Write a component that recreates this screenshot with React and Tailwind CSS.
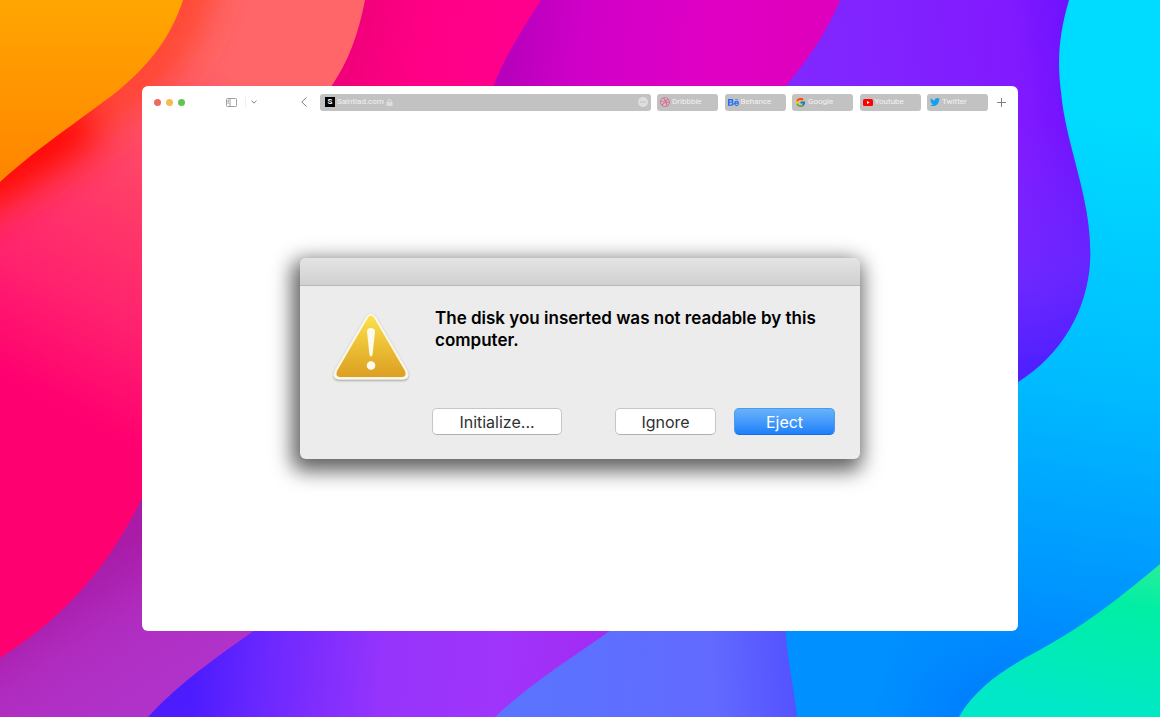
import React from "react";
import { FaDribbble, FaBehance, FaTwitter, FaLock } from "react-icons/fa";
import { FcGoogle } from "react-icons/fc";

const bookmarks = [
  { label: "Dribbble", href: "#dribbble", icon: <FaDribbble className="size-[10px] text-[#e2588c]" /> },
  { label: "Behance", href: "#behance", icon: <FaBehance className="size-[11px] text-[#1769ff]" /> },
  { label: "Google", href: "#google", icon: <FcGoogle className="size-[11px]" /> },
  {
    label: "Youtube",
    href: "#youtube",
    icon: (
      <svg viewBox="0 0 20 14" className="h-[7px] w-[10px]" aria-hidden="true">
        <rect width="20" height="14" rx="3" fill="#ff0000" />
        <path d="M8 4l5.4 3L8 10z" fill="#fff" />
      </svg>
    ),
  },
  { label: "Twitter", href: "#twitter", icon: <FaTwitter className="size-[10px] text-[#14a0f0]" /> },
];

function Wallpaper() {
  return (
    <svg
      className="absolute inset-0 h-full w-full"
      viewBox="0 0 1160 717"
      preserveAspectRatio="xMidYMid slice"
      aria-hidden="true"
    >
      <defs>
        <linearGradient id="orange" x1="0" y1="0" x2="0" y2="1">
          <stop offset="0" stopColor="#ffa600" />
          <stop offset="1" stopColor="#ff8400" />
        </linearGradient>
        <linearGradient id="coral" gradientUnits="userSpaceOnUse" x1="248" y1="78" x2="70" y2="412">
          <stop offset="0" stopColor="#ff666a" />
          <stop offset="0.45" stopColor="#ff3a68" />
          <stop offset="0.72" stopColor="#ff226e" />
          <stop offset="1" stopColor="#ff0070" />
        </linearGradient>
        <linearGradient id="pink" gradientUnits="userSpaceOnUse" x1="340" y1="30" x2="500" y2="60">
          <stop offset="0" stopColor="#ee0078" />
          <stop offset="0.5" stopColor="#ff0085" />
          <stop offset="1" stopColor="#ff008c" />
        </linearGradient>
        <linearGradient id="magenta" gradientUnits="userSpaceOnUse" x1="510" y1="30" x2="800" y2="60">
          <stop offset="0" stopColor="#b800bc" />
          <stop offset="0.25" stopColor="#d000c8" />
          <stop offset="0.7" stopColor="#e000c4" />
          <stop offset="1" stopColor="#de00bc" />
        </linearGradient>
        <linearGradient id="violet" gradientUnits="userSpaceOnUse" x1="810" y1="120" x2="1085" y2="90">
          <stop offset="0" stopColor="#8028ff" />
          <stop offset="0.75" stopColor="#821aff" />
          <stop offset="1" stopColor="#6c10ff" />
        </linearGradient>
        <linearGradient id="violetFade" gradientUnits="userSpaceOnUse" x1="1020" y1="130" x2="1060" y2="360">
          <stop offset="0" stopColor="#6a34ff" stopOpacity="0" />
          <stop offset="0.6" stopColor="#6230ff" stopOpacity="0.6" />
          <stop offset="1" stopColor="#4a20ff" stopOpacity="0.9" />
        </linearGradient>
        <linearGradient id="plum" gradientUnits="userSpaceOnUse" x1="70" y1="580" x2="140" y2="690">
          <stop offset="0" stopColor="#a81ca8" />
          <stop offset="0.5" stopColor="#b02cc0" />
          <stop offset="1" stopColor="#b032c8" />
        </linearGradient>
        <linearGradient id="indigo" gradientUnits="userSpaceOnUse" x1="195" y1="655" x2="590" y2="690">
          <stop offset="0" stopColor="#4c1cff" />
          <stop offset="0.18" stopColor="#6b28ff" />
          <stop offset="0.48" stopColor="#9634fc" />
          <stop offset="0.78" stopColor="#a034fa" />
          <stop offset="1" stopColor="#a22cf4" />
        </linearGradient>
        <linearGradient id="periwinkle" gradientUnits="userSpaceOnUse" x1="520" y1="700" x2="795" y2="680">
          <stop offset="0" stopColor="#5a74ff" />
          <stop offset="0.7" stopColor="#626aff" />
          <stop offset="1" stopColor="#5452ff" />
        </linearGradient>
        <linearGradient id="sky" gradientUnits="userSpaceOnUse" x1="1100" y1="110" x2="1010" y2="700">
          <stop offset="0" stopColor="#00dcff" />
          <stop offset="0.45" stopColor="#00bcff" />
          <stop offset="0.8" stopColor="#0096ff" />
          <stop offset="1" stopColor="#007cff" />
        </linearGradient>
        <linearGradient id="skyLow" gradientUnits="userSpaceOnUse" x1="890" y1="640" x2="1000" y2="670">
          <stop offset="0" stopColor="#0090ff" />
          <stop offset="1" stopColor="#0090ff" stopOpacity="0" />
        </linearGradient>
        <linearGradient id="green" gradientUnits="userSpaceOnUse" x1="1140" y1="570" x2="1110" y2="717">
          <stop offset="0" stopColor="#20ee9c" />
          <stop offset="0.25" stopColor="#00eea4" />
          <stop offset="1" stopColor="#00e8c8" />
        </linearGradient>
        <filter id="soft" filterUnits="userSpaceOnUse" x="-120" y="-120" width="500" height="500">
          <feGaussianBlur stdDeviation="20" />
        </filter>
        <clipPath id="coralClip">
          <path d="M0 0H365C358 36 348 62 331 87L142 498C112 560 70 614 0 658Z" />
        </clipPath>
      </defs>
      <rect width="1160" height="717" fill="url(#sky)" />
      <path d="M785 600H1018V717H785Z" fill="url(#skyLow)" />
      <path d="M450 600H785C784 652 794 684 797 717H450Z" fill="url(#periwinkle)" />
      <path d="M148 717L220 600H640L611 630C572 658 531 683 495 717Z" fill="url(#indigo)" />
      <path d="M0 480H300L255 630C217 657 180 682 148 717H0Z" fill="url(#plum)" />
      <path d="M700 0H1069C1059 34 1057 60 1061 92C1066 148 1093 200 1090 262C1087 310 1062 354 1018 382L900 440H700Z" fill="url(#violet)" />
      <path d="M700 0H1069C1059 34 1057 60 1061 92C1066 148 1093 200 1090 262C1087 310 1062 354 1018 382L900 440H700Z" fill="url(#violetFade)" />
      <path d="M500 0H840C827 32 809 58 785 87L760 120H480Z" fill="url(#magenta)" />
      <path d="M340 0H541C523 28 505 56 493 87L480 120H310Z" fill="url(#pink)" />
      <path d="M0 0H365C358 36 348 62 331 87L142 498C112 560 70 614 0 658Z" fill="url(#coral)" />
      <g clipPath="url(#coralClip)">
        <path d="M200 -60C184 46 150 68 119 92C75 124 40 146 -40 200" fill="none" stroke="#ff4020" strokeWidth="40" filter="url(#soft)" />
        <path d="M85 118C60 134 40 146 -60 206" fill="none" stroke="#ff0000" strokeWidth="50" filter="url(#soft)" />
      </g>
      <path d="M0 0H183C171 36 152 62 119 90C78 122 42 144 0 182Z" fill="url(#orange)" />
      <path d="M1160 564C1110 606 1080 628 1036 652C1002 670 974 690 959 717H1160Z" fill="url(#green)" />
    </svg>
  );
}

function Toolbar() {
  return (
    <header className="flex h-8 items-center px-3 font-[Roboto,sans-serif] text-[8px] leading-none text-[#808080]">
      <div className="flex gap-[5px]">
        <button aria-label="Close" className="size-[7px] rounded-full bg-[#ec6a5f]" />
        <button aria-label="Minimize" className="size-[7px] rounded-full bg-[#f4bd50]" />
        <button aria-label="Zoom" className="size-[7px] rounded-full bg-[#61c455]" />
      </div>
      <button aria-label="Show sidebar" className="ml-[41px]">
        <svg viewBox="0 0 22 18" className="h-[9px] w-[11px]" fill="none" stroke="currentColor" strokeWidth="1.5" aria-hidden="true">
          <rect x="1" y="1" width="20" height="16" rx="2" />
          <path d="M8 1v16M3 4.500h3M3 7.500h3M3 10.500h3" />
        </svg>
      </button>
      <span className="ml-2 h-[10px] w-px bg-[#eeeeee]" />
      <button aria-label="Tab groups" className="ml-[5px]">
        <svg viewBox="0 0 12 12" className="size-[6px]" fill="none" stroke="currentColor" strokeWidth="2" strokeLinecap="round" strokeLinejoin="round" aria-hidden="true">
          <path d="M1.500 4L6 8.200L10.500 4" />
        </svg>
      </button>
      <button aria-label="Back" className="ml-11">
        <svg viewBox="0 0 12 20" className="h-[10px] w-[6px]" fill="none" stroke="currentColor" strokeWidth="2" strokeLinecap="round" strokeLinejoin="round" aria-hidden="true">
          <path d="M10.500 1.500L1.500 10L10.500 18.500" />
        </svg>
      </button>
      <div className="ml-[13px] flex h-[17px] min-w-0 flex-1 items-center rounded-[3px] bg-[#c2c2c2] pr-[3px] pl-[5px] text-[#f2f2f2]">
        <span className="flex size-[10px] items-center justify-center bg-black text-[8px] font-bold text-white">S</span>
        <a href="#saintlad" className="ml-[2px]">Saintlad.com</a>
        <FaLock className="ml-[2px] size-[7px] text-[#dedede]" />
        <button aria-label="Page options" className="ml-auto">
          <svg viewBox="0 0 20 20" className="size-[10px]" aria-hidden="true">
            <circle cx="10" cy="10" r="10" fill="#dedede" />
            <circle cx="5.500" cy="10" r="1.500" fill="#bcbcbc" />
            <circle cx="10" cy="10" r="1.500" fill="#bcbcbc" />
            <circle cx="14.500" cy="10" r="1.500" fill="#bcbcbc" />
          </svg>
        </button>
      </div>
      <nav className="ml-[6px] flex w-[331px] justify-between">
        {bookmarks.map((b) => (
          <a key={b.label} href={b.href} className="flex h-[17px] w-[61px] items-center gap-[2px] rounded-[3px] bg-[#c2c2c2] pl-[3px] text-[#f2f2f2]">
            {b.icon}
            {b.label}
          </a>
        ))}
      </nav>
      <button aria-label="New tab" className="ml-[9px]">
        <svg viewBox="0 0 18 18" className="size-[9px]" fill="none" stroke="currentColor" strokeWidth="2" strokeLinecap="round" aria-hidden="true">
          <path d="M9 1v16M1 9h16" />
        </svg>
      </button>
    </header>
  );
}

function WarningIcon() {
  return (
    <svg viewBox="0 0 80 72" className="h-[72px] w-20 shrink-0" aria-hidden="true">
      <defs>
        <linearGradient id="warn" x1="0" y1="0" x2="0" y2="1">
          <stop offset="0" stopColor="#fbe14c" />
          <stop offset="0.45" stopColor="#edc236" />
          <stop offset="1" stopColor="#dc9f22" />
        </linearGradient>
        <filter id="warnShadow" x="-10%" y="-10%" width="120%" height="125%">
          <feDropShadow dx="0" dy="1" stdDeviation="0.8" floodColor="#000" floodOpacity="0.4" />
        </filter>
      </defs>
      <path
        d="M35 6Q40 -1 45 6L76 59Q80 68.500 71 68.500H9Q0 68.500 4 59Z"
        fill="#faf6e8"
        filter="url(#warnShadow)"
      />
      <path d="M36.800 7Q40 2.500 43.200 7L74 60Q76 66 70.500 66H9.500Q4 66 6 60Z" fill="url(#warn)" />
      <path d="M36 20.500Q36 17 40 17T44 20.500L41.600 43Q41.300 45.500 40 45.500T38.400 43Z" fill="#fdfbee" />
      <circle cx="40" cy="54.500" r="4.300" fill="#fdfbee" />
    </svg>
  );
}

function Dialog() {
  const plain =
    "h-[27px] rounded-[5px] border border-[#c6c6c6] border-b-[#b0b0b0] bg-white text-[#303030]";
  return (
    <section
      role="alertdialog"
      aria-labelledby="message"
      className="w-[560px] max-w-full overflow-hidden rounded-[6px] bg-[#ececec] shadow-[-3px_7px_20px_5px_rgba(0,0,0,0.62)]"
    >
      <div className="h-7 border-b border-[#b8b8b8] bg-linear-to-b from-[#e4e4e4] to-[#d0d0d0]" />
      <div className="flex gap-6 px-[31px] pt-[21px]">
        <div className="pt-1">
          <WarningIcon />
        </div>
        <h1 id="message" className="font-[Inter,sans-serif] text-[17px] leading-[22px] font-semibold text-black">
          The disk you inserted was not readable by this computer.
        </h1>
      </div>
      <div className="flex pt-[25px] pr-[25px] pb-6 pl-[132px] font-[Inter,sans-serif] text-[16px] leading-none">
        <button className={`${plain} w-[130px]`}>Initialize...</button>
        <button className={`${plain} ml-auto w-[101px]`}>Ignore</button>
        <button className="ml-[18px] h-[27px] w-[101px] rounded-[5px] border border-[#4a9af0] border-b-[#1a6fe0] bg-linear-to-b from-[#68b2fa] to-[#1a80fa] text-white">
          Eject
        </button>
      </div>
    </section>
  );
}

export default function App() {
  return (
    <div className="relative flex min-h-screen overflow-hidden px-[142px] py-[86px]">
      <Wallpaper />
      <div className="relative flex min-w-0 flex-1 flex-col rounded-[6px] bg-white">
        <Toolbar />
        <main className="flex flex-1 justify-center pt-[140px]">
          <div className="max-w-full">
            <Dialog />
          </div>
        </main>
      </div>
    </div>
  );
}
